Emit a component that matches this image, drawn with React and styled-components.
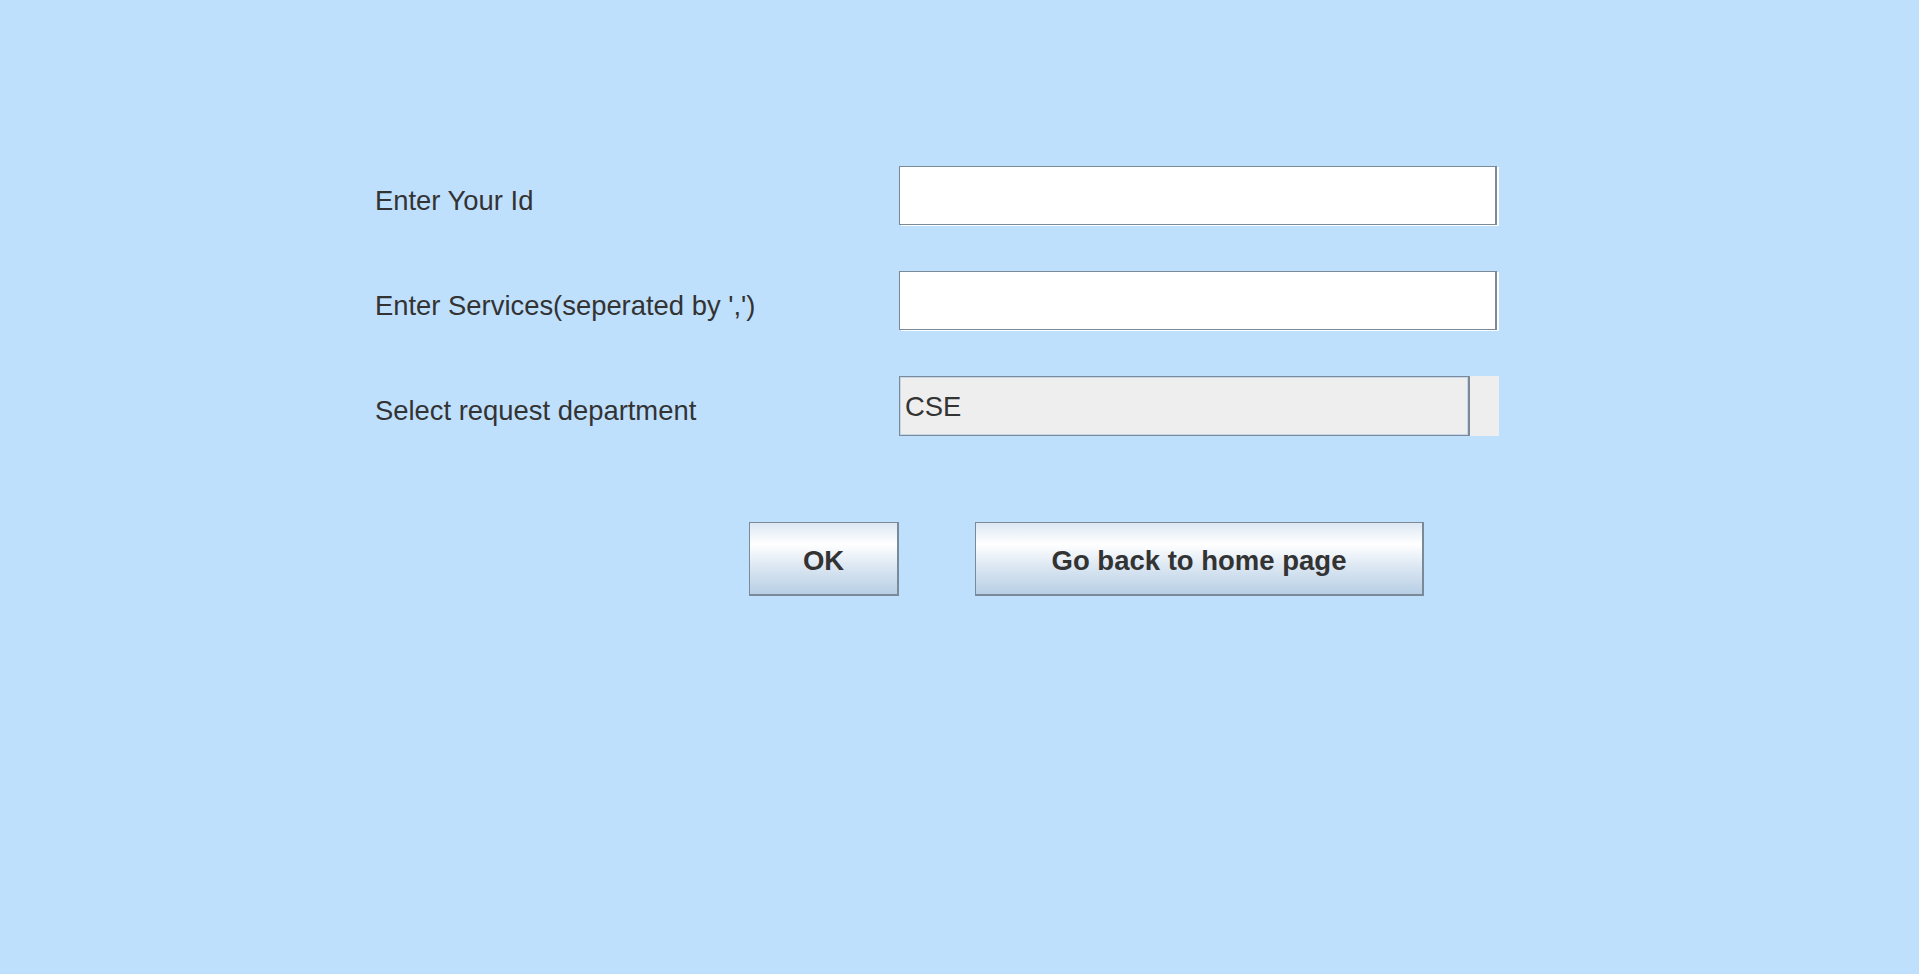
import styled, { createGlobalStyle } from "styled-components";

const GlobalStyle = createGlobalStyle`
  html,
  body {
    margin: 0;
    padding: 0;
    background: #bfe0fd;
  }

  body {
    font-family: "Liberation Sans", Arial, sans-serif;
    color: #333333;
  }
`;

const Page = styled.div`
  min-height: 100vh;
  box-sizing: border-box;
  padding: 166px 0 0 375px;
  background: #bfe0fd;
`;

const Form = styled.div`
  display: grid;
  grid-template-columns: 524px 600px;
  grid-auto-rows: 60px;
  row-gap: 45px;
`;

const Label = styled.label`
  display: block;
  padding-top: 10px;
  font-size: 27.4px;
  line-height: 50px;
  white-space: nowrap;
  color: #333333;
`;

// metal style flush 3d border: dark outline with a white highlight bottom/right
const TextField = styled.input`
  box-sizing: border-box;
  width: 598px;
  height: 59px;
  margin: 0;
  padding: 0 6px;
  border: 1px solid #7a8a99;
  border-right-width: 2px;
  box-shadow: 2px 1px 0 #ffffff;
  background: #ffffff;
  font-family: inherit;
  font-size: 27.4px;
  color: #333333;
  outline: none;
`;

const Combo = styled.div`
  display: flex;
  width: 600px;
  height: 60px;
`;

const ComboValue = styled.div`
  box-sizing: border-box;
  width: 571px;
  height: 60px;
  padding: 2px 0 0 5px;
  border: 1px solid #7a8a99;
  border-right-width: 2px;
  box-shadow: inset 0 0 0 1px #c4d6e8;
  background: #eeeeee;
  font-size: 27.4px;
  line-height: 55px;
  color: #333333;
`;

const ComboArrow = styled.div`
  flex: 1;
  background: #eeeeee;
`;

const ButtonRow = styled.div`
  display: flex;
  gap: 76px;
  margin: 86px 0 0 374px;
`;

const Button = styled.button`
  box-sizing: border-box;
  width: ${(p) => p.$width}px;
  height: 74px;
  margin: 0;
  padding: 3px 0 0;
  border: 1px solid #7a8a99;
  border-right-width: 2px;
  border-bottom-width: 2px;
  background: linear-gradient(
    to bottom,
    #dde8f3 0%,
    #ffffff 30%,
    #dde8f3 60%,
    #b8cfe5 100%
  );
  font-family: "Liberation Sans", Arial, sans-serif;
  font-size: 27.5px;
  font-weight: 700;
  line-height: 67px;
  color: #333333;
  cursor: pointer;
`;

export default function App() {
  return (
    <Page>
      <GlobalStyle />
      <Form>
        <Label htmlFor="user-id">Enter Your Id</Label>
        <TextField id="user-id" type="text" />

        <Label htmlFor="services">Enter Services(seperated by ',')</Label>
        <TextField id="services" type="text" />

        <Label>Select request department</Label>
        <Combo>
          <ComboValue>CSE</ComboValue>
          <ComboArrow />
        </Combo>
      </Form>
      <ButtonRow>
        <Button $width={150}>OK</Button>
        <Button $width={449}>Go back to home page</Button>
      </ButtonRow>
    </Page>
  );
}
